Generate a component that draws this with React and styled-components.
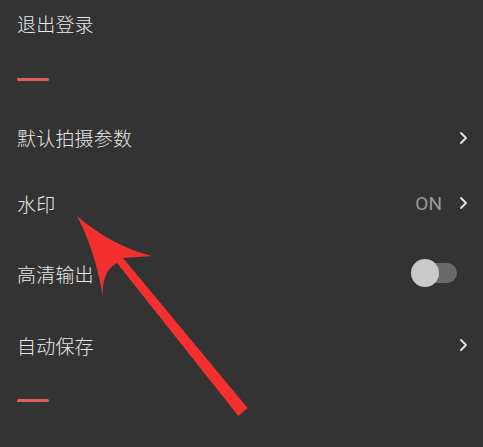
import React from "react"
import styled, { createGlobalStyle } from "styled-components"

const GlobalStyle = createGlobalStyle`
  html, body {
    margin: 0;
    padding: 0;
    background: #333333;
  }
  body {
    font-family: "Noto Sans CJK SC", "Noto Sans", sans-serif;
  }
`

const Page = styled.div`
  position: relative;
  width: 483px;
  height: 447px;
  overflow: hidden;
  background: #333333;
`

const Row = styled.div`
  display: flex;
  align-items: center;
  justify-content: space-between;
  height: ${({ h }) => h}px;
  padding: 0 13px 0 17px;
`

const Label = styled.span`
  color: #e8e8e8;
  font-size: 19px;
  font-weight: 300;
  letter-spacing: 0.2px;
`

const Right = styled.div`
  display: flex;
  align-items: center;
  gap: 17px;
`

const Value = styled.span`
  color: #9a9a9a;
  font-family: Roboto, "Noto Sans", sans-serif;
  font-size: 19px;
`

const Chevron = styled.svg`
  width: 9px;
  height: 14px;
  margin-right: 2px;
`

const DividerBlock = styled.div`
  display: flex;
  align-items: center;
  height: ${({ h }) => h}px;
  padding: ${({ pt }) => pt}px 0 0 17px;
  box-sizing: border-box;
`

const RedLine = styled.div`
  width: 32px;
  height: 3px;
  border-radius: 2px;
  background: #e25c5c;
`

const Toggle = styled.div`
  position: relative;
  width: 46px;
  height: 28px;
  margin-right: 13px;
`

const Track = styled.div`
  position: absolute;
  left: 9px;
  right: 0;
  top: 4px;
  height: 20px;
  border-radius: 10px;
  background: #6a6a6a;
`

const Knob = styled.div`
  position: absolute;
  left: 0;
  top: 0;
  width: 28px;
  height: 28px;
  border-radius: 50%;
  background: #c9c9c9;
`

const Arrow = styled.svg`
  position: absolute;
  left: 0;
  top: 0;
  width: 483px;
  height: 447px;
  pointer-events: none;
`

const ChevronIcon = () => (
  <Chevron viewBox="0 0 9 14">
    <path d="M2 2 L7 7 L2 12" fill="none" stroke="#e6e6e6" strokeWidth="1.8" strokeLinecap="round" strokeLinejoin="round" />
  </Chevron>
)

const App = () => (
  <Page>
    <GlobalStyle />
    <Row h={47}>
      <Label>退出登录</Label>
    </Row>
    <DividerBlock h={58} pt={7}>
      <RedLine />
    </DividerBlock>
    <Row h={65}>
      <Label>默认拍摄参数</Label>
      <ChevronIcon />
    </Row>
    <Row h={66}>
      <Label>水印</Label>
      <Right>
        <Value>ON</Value>
        <ChevronIcon />
      </Right>
    </Row>
    <Row h={74}>
      <Label>高清输出</Label>
      <Toggle>
        <Track />
        <Knob />
      </Toggle>
    </Row>
    <Row h={70}>
      <Label>自动保存</Label>
      <ChevronIcon />
    </Row>
    <DividerBlock h={40} pt={0}>
      <RedLine />
    </DividerBlock>
    <Arrow viewBox="0 0 483 447">
      <path
        d="M77 216 Q112 246 152 256 L123 258 L247.6 408 L238.4 416 L117 263 Q101 272 103 297 Q95 250 77 216 Z"
        fill="#f3302f"
      />
    </Arrow>
  </Page>
)

export default App
